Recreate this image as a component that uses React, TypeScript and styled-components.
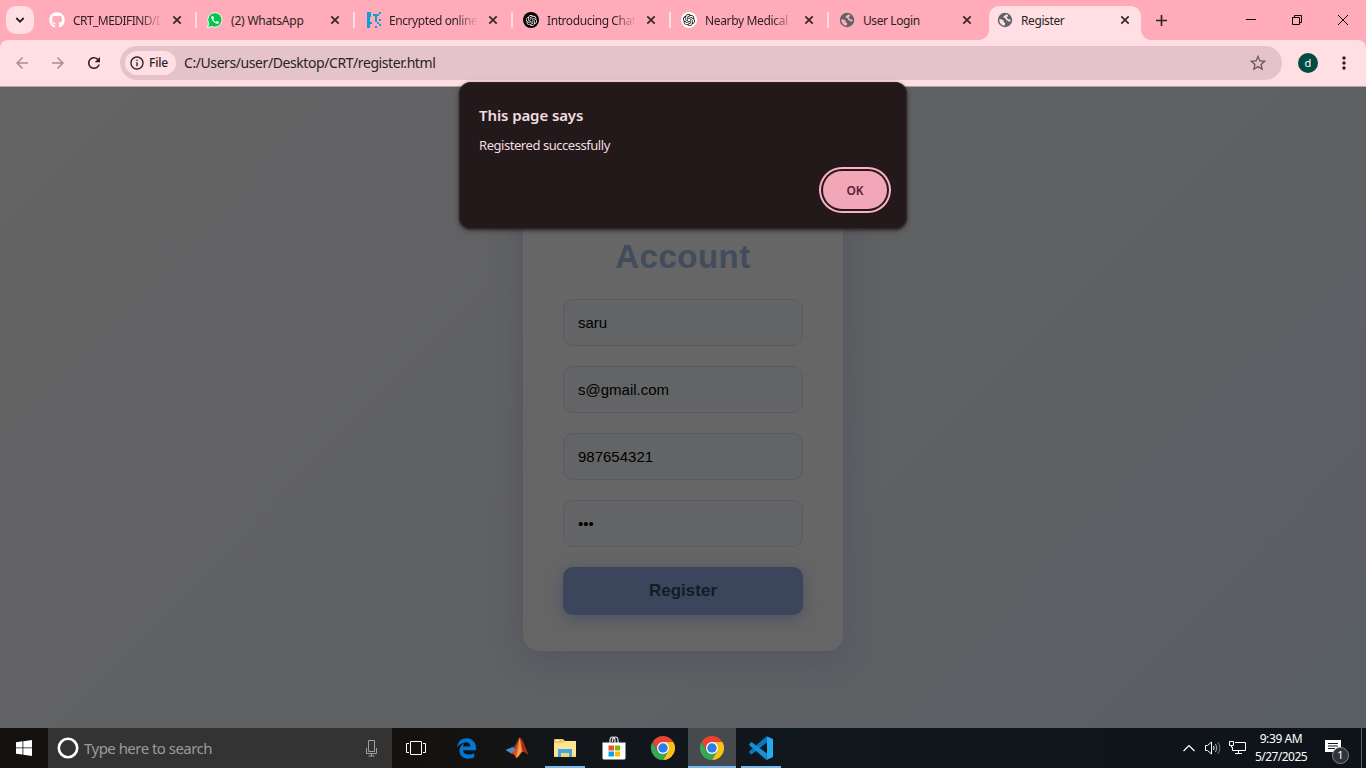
import React from "react";
import styled, { createGlobalStyle, css } from "styled-components";
import { SiOpenai } from "react-icons/si";
import { FaGithub, FaEdgeLegacy } from "react-icons/fa6";
import { MdRefresh, MdArrowBack, MdArrowForward, MdStarBorder, MdMoreVert, MdInfoOutline } from "react-icons/md";

const ui = `"Noto Sans", "Open Sans", sans-serif`;

const Global = createGlobalStyle`
  * { box-sizing: border-box; }
  body { margin: 0; overflow: hidden; background: #000; font-family: ${ui}; }
  svg { display: block; flex: none; }
`;

const Screen = styled.div`
  position: relative;
  width: 1366px;
  height: 768px;
  display: flex;
  flex-direction: column;
  overflow: hidden;
`;

/* ---------- text ---------- */
const Text = styled.span<{ $size: number; $track?: number; $color?: string; $weight?: number }>`
  display: block;
  font-size: ${(p) => p.$size}px;
  letter-spacing: ${(p) => p.$track ?? 0}px;
  color: ${(p) => p.$color ?? "#2b1f22"};
  font-weight: ${(p) => p.$weight ?? 400};
  white-space: pre;
  line-height: 1.36;
`;

/* ---------- tab strip ---------- */
const TabStrip = styled.header`
  height: 40px;
  background: #ffabb9;
  display: flex;
  align-items: stretch;
  padding-left: 6px;
`;
const TabSearch = styled.button`
  width: 28px;
  height: 28px;
  margin: 6px 7px 0 0;
  padding: 0;
  border: 0;
  border-radius: 10px;
  background: #ffdee4;
  display: grid;
  place-items: center;
`;
const TabBox = styled.div<{ $active?: boolean; $divider?: boolean }>`
  position: relative;
  width: 152px;
  height: 34px;
  margin: 6px 6px 0 0;
  padding: 0 8px;
  display: flex;
  align-items: center;
  ${(p) => p.$active && css`
    background: #ffdee4;
    border-radius: 10px 10px 0 0;
    &::before, &::after {
      content: "";
      position: absolute;
      bottom: 0;
      width: 10px;
      height: 10px;
    }
    &::before { left: -10px; background: radial-gradient(circle at 0 0, transparent 9.5px, #ffdee4 10.2px); }
    &::after { right: -10px; background: radial-gradient(circle at 100% 0, transparent 9.5px, #ffdee4 10.2px); }
  `}
  ${(p) => p.$divider && css`
    &::before {
      content: "";
      position: absolute;
      left: -4px;
      top: 6px;
      width: 2px;
      height: 16px;
      border-radius: 1px;
      background: #ffdee4;
    }
  `}
`;
const Favicon = styled.div`
  width: 16px;
  height: 28px;
  margin-bottom: 6px;
  display: grid;
  place-items: center;
`;
const TabTitle = styled.div<{ $fade?: boolean }>`
  width: 89px;
  margin: 0 8px 4px 7px;
  padding-left: 1px;
  overflow: hidden;
  ${(p) => p.$fade && css`mask-image: linear-gradient(90deg, #000 68px, transparent 90px);`}
`;
const CloseWrap = styled.div`
  width: 16px;
  margin-bottom: 6px;
  display: grid;
  place-items: center;
`;
const NewTab = styled.div`
  width: 28px;
  height: 40px;
  display: grid;
  place-items: center;
`;
const WindowButtons = styled.div`
  margin-left: auto;
  display: flex;
`;
const WindowButton = styled.div`
  width: 46px;
  height: 40px;
  display: grid;
  place-items: center;
`;

/* ---------- toolbar ---------- */
const ToolbarBack = styled.div`
  background: #ffabb9;
`;
const Toolbar = styled.div`
  height: 47px;
  background: #ffdee4;
  border-radius: 8px 8px 0 0;
  border-bottom: 1px solid #b5a2a6;
  display: flex;
  align-items: center;
  padding: 0 10px 0 10px;
`;
const NavButton = styled.div<{ $color: string }>`
  width: 24px;
  margin-right: 12px;
  display: grid;
  place-items: center;
  color: ${(p) => p.$color};
`;
const Omnibox = styled.div`
  width: 1162px;
  height: 34px;
  margin-left: 2px;
  border-radius: 17px;
  background: #e4c4ca;
  display: flex;
  align-items: center;
  padding: 0 14px 0 5px;
`;
const FileChip = styled.div`
  width: 51px;
  height: 24px;
  border-radius: 12px;
  background: #ffdee4;
  display: flex;
  align-items: center;
  gap: 4px;
  padding-left: 4px;
  margin-right: 8px;
`;
const StarWrap = styled.div`
  margin-left: auto;
  color: #6c5a5f;
`;
const Avatar = styled.div`
  width: 20px;
  height: 20px;
  margin: 0 16px;
  border-radius: 50%;
  background: #004d40;
  display: grid;
  place-items: center;
`;

/* ---------- page ---------- */
const Page = styled.main`
  flex: 1;
  min-height: 0;
  background: linear-gradient(135deg, #646465 0%, #606163 50%, #5a5f64 100%);
  display: flex;
  justify-content: center;
  align-items: center;
  font-family: "Liberation Sans", Arial, sans-serif;
`;
const Card = styled.form`
  width: 320px;
  height: 487px;
  padding: 72px 40px 36px;
  border-radius: 16px;
  background: #666666;
  box-shadow: 0 8px 32px rgba(57, 63, 92, 0.32);
  display: flex;
  flex-direction: column;
  gap: 20px;
`;
const Heading = styled.h1`
  margin: 0 0 4px;
  height: 39px;
  font-size: 33px;
  line-height: 41px;
  letter-spacing: 0.5px;
  font-weight: 700;
  text-align: center;
  color: #414c5c;
`;
const Field = styled.input`
  width: 240px;
  height: 47px;
  padding: 0 14px;
  border: 1px solid #595a62;
  border-radius: 10px;
  background: #636465;
  color: #000;
  font: 15px "Liberation Sans", Arial, sans-serif;
  outline: 0;
`;
const Submit = styled.button`
  width: 240px;
  height: 48px;
  padding: 0 0 1px;
  border: 0;
  border-radius: 10px;
  background: #3b455c;
  box-shadow: 0 4px 16px rgba(59, 69, 100, 0.6);
  color: #151b25;
  font: 700 17px "Liberation Sans", Arial, sans-serif;
`;

/* ---------- dialog ---------- */
const Dialog = styled.section`
  position: absolute;
  left: 459px;
  top: 82px;
  width: 448px;
  height: 147px;
  padding: 22px 20px 0;
  border-radius: 12px;
  background: #23191b;
  box-shadow: inset 0 0 0 1px #32262a, 0 1px 3px rgba(0, 0, 0, 0.5), 0 2px 6px rgba(0, 0, 0, 0.25);
  display: flex;
  flex-direction: column;
`;
const DialogLine = styled.div<{ $height: number; $gap: number }>`
  height: ${(p) => p.$height}px;
  margin-bottom: ${(p) => p.$gap}px;
  display: flex;
  align-items: center;
`;
const OkButton = styled.button`
  align-self: flex-end;
  width: 64px;
  height: 38px;
  padding: 2px 0 0;
  border: 0;
  border-radius: 19px;
  background: #f2a7b8;
  box-shadow: 0 0 0 2px #23191b, 0 0 0 4px #ffb1c1;
  display: grid;
  place-items: center;
  font-family: ${ui};
`;

/* ---------- taskbar ---------- */
const Taskbar = styled.footer`
  height: 40px;
  background: linear-gradient(90deg, #14100d 0, #15110e 30%, #11161b 44%, #10171d 60%, #0d1319 100%);
  display: flex;
  align-items: stretch;
`;
const StartButton = styled.div`
  width: 48px;
  display: grid;
  place-items: center;
`;
const SearchBox = styled.div`
  width: 344px;
  background: #333333;
  display: flex;
  align-items: center;
  padding: 0 14px 0 9px;
  gap: 5px;
`;
const MicWrap = styled.div`
  margin-left: auto;
`;
const TaskItem = styled.div<{ $open?: boolean; $active?: boolean; $width?: number }>`
  width: ${(p) => p.$width ?? 49}px;
  display: grid;
  place-items: center;
  background: ${(p) => (p.$active ? "#454a4e" : "transparent")};
  position: relative;
  ${(p) => (p.$open || p.$active) && css`
    &::after {
      content: "";
      position: absolute;
      bottom: 0;
      left: ${p.$active ? 0 : 5}px;
      right: ${p.$active ? 0 : 4}px;
      height: 2px;
      background: #76b9ed;
    }
  `}
`;
const Tray = styled.div`
  margin-left: auto;
  display: flex;
  align-items: center;
`;
const TrayIcon = styled.div<{ $width: number }>`
  width: ${(p) => p.$width}px;
  display: grid;
  place-items: center;
`;
const Clock = styled.div`
  width: 62px;
  display: flex;
  flex-direction: column;
  align-items: center;
  gap: 2px;
`;
const ActionCenter = styled.div`
  position: relative;
  width: 49px;
  height: 40px;
  padding: 12px 0 0 13px;
`;
const Badge = styled.div`
  position: absolute;
  left: 20px;
  top: 19px;
  width: 17px;
  height: 17px;
  border-radius: 50%;
  border: 1px solid #85878a;
  background: #30343a;
  display: grid;
  place-items: center;
`;
const ShowDesktop = styled.div`
  width: 5px;
  height: 40px;
  border-left: 1px solid #5b5f63;
`;

/* ---------- icons ---------- */
const CloseIcon = () => (
  <svg width="10" height="10" viewBox="0 0 10 10"><path d="M1.3 1.3 8.7 8.7M8.7 1.3 1.3 8.7" stroke="#33272a" strokeWidth="1.7" /></svg>
);
const GlobeIcon = ({ land }: { land: string }) => (
  <svg width="16" height="16" viewBox="0 0 16 16">
    <circle cx="8" cy="8" r="7.2" fill="#5f6368" />
    <path d="M2.200 7.600C3.500 7.100 5 7.400 6.200 8.300 7.400 9.200 6 10 7.200 10.400 8.800 10.800 8.300 12.100 7.400 13.700 4.400 13.400 2.200 10.900 2.200 7.600Z" fill={land} />
    <path d="M9.200 2.300C8.300 4 6.500 3.600 6.400 5.200 6.500 6.300 7.700 5.700 8.500 6.400 9.300 7.200 8.900 8.200 10.200 8.400 11.400 8.500 11.500 9.700 12.900 9.800 13.300 9.200 13.600 8.600 13.700 7.800 12.900 7.300 12.300 7.900 11.500 7.200 10.800 6.400 9.800 6.600 9.700 5.600 9.700 4.700 11.100 4.800 11.200 3.300 10.600 2.800 10 2.500 9.200 2.300Z" fill={land} />
  </svg>
);
const WhatsAppIcon = () => (
  <svg width="16" height="16" viewBox="0 0 16 16">
    <path d="M8 .6A7.3 7.3 0 0 0 1.7 11.6L.6 15.5l4-1A7.3 7.3 0 1 0 8 .6Z" fill="#05c34b" stroke="#f2fff4" strokeWidth="1" />
    <path d="M5.5 4.1c-.8.2-1.3 1-1.1 2 .5 2.900 2.900 5.200 5.600 5.700 1 .1 1.900-.6 1.900-1.500 0-.5-1.700-1.400-2.100-1.200l-.8.9c-1.200-.5-2.200-1.400-2.700-2.600l.7-.9c.1-.4-.7-2.400-1.500-2.400Z" fill="#fff" />
  </svg>
);
const PixelIcon = () => (
  <svg width="16" height="16" viewBox="0 0 16 16" fill="#0f9fd0" shapeRendering="crispEdges">
    <path d="M2 0h4v5H5v5h2v2H5v4H2ZM8 2h6v2h-2v6h-2V4H8ZM14 0h2v2h-2ZM14 7h2v2h-2ZM12 10h2v2h-2ZM14 12h2v2h-2ZM10 14h2v2h-2Z" />
  </svg>
);
const OpenAiBadge = styled.div<{ $dark?: boolean }>`
  width: 16px;
  height: 16px;
  border-radius: 50%;
  display: grid;
  place-items: center;
  background: ${(p) => (p.$dark ? "#000" : "#fff")};
  color: ${(p) => (p.$dark ? "#fff" : "#111")};
`;
const ChromeIcon = () => (
  <svg width="24" height="24" viewBox="0 0 48 48">
    <path d="M44.800 12A24 24 0 0 1 24 48L34.400 30 24 12Z" fill="#fbc116" />
    <path d="M3.200 12A24 24 0 0 0 24 48L34.400 30 13.600 30Z" fill="#34a853" />
    <path d="M3.200 12A24 24 0 0 1 44.800 12H24L13.600 30Z" fill="#ea4335" />
    <circle cx="24" cy="24" r="12" fill="#fff" />
    <circle cx="24" cy="24" r="9.500" fill="#2b7de9" />
  </svg>
);
const MatlabIcon = () => (
  <svg width="24" height="22" viewBox="0 0 24 22">
    <path d="M.5 13 8 9.800l3 2.700-4.500 4.300Z" fill="#4d8fc4" />
    <path d="M8 9.800C10.500 9 11 5 14.500.8L11 14l-3 1.500-1.500 1.300 4.500-4.300Z" fill="#6f3430" />
    <path d="M14.500.5C12.500 5 11.500 11.500 6.500 16.800c2.500-.6 3.500 2 4.500 4.200 4-1 5-6.500 7-6.500 1.800 0 3 1.500 5.500 3.300C20.500 12.500 17.500.6 14.500.5Z" fill="#d9531e" />
    <path d="M14.500.5c-.5 5-1.500 13-3.500 20.500 3.300-1.500 4-5.500 6-6.500-1-4-1.700-10.500-2.500-14Z" fill="#f6a04d" />
    <path d="M14.500.5c1.500 2 2.200 8.500 3.500 14 1.800 0 3 1.500 5.500 3.300C20.500 12.500 17.500.6 14.500.5Z" fill="#a9281b" />
  </svg>
);
const FolderIcon = () => (
  <svg width="22" height="20" viewBox="0 0 22 20">
    <path d="M0 1.500 1 1h8l2 2h10v16H0Z" fill="#f0c55a" />
    <path d="M2 2h3v1H2Z" fill="#fff" />
    <path d="M0 5h9l2-2h11v16H0Z" fill="#ffe592" />
    <path d="M4 11h14v8h-3v-4H7v4H4Z" fill="#3fa9e5" />
    <path d="M0 17.500h4V19H0ZM18 17.500h4V19h-4ZM7 15h8v4H7Z" fill="#f5d673" />
  </svg>
);
const StoreIcon = () => (
  <svg width="24" height="24" viewBox="0 0 24 24">
    <path d="M8 8V4.500C8 2.500 9 1 10.500 1S13 2.500 13 4.500V7M10.500 6V4.500C10.500 2.500 12 1 13.500 1S16 2.500 16 4.500V8" fill="none" stroke="#e8e8e8" strokeWidth="1.200" />
    <path d="M.5 6.500h23V22a1.500 1.500 0 0 1-1.500 1.500H2A1.500 1.500 0 0 1 .5 22Z" fill="#fff" />
    <path d="M6.500 9.500H12v5H6.500Z" fill="#f25022" /><path d="M13 9.500h5v5h-5Z" fill="#7fba00" />
    <path d="M6.500 15.500H12v5H6.500Z" fill="#00a4ef" /><path d="M13 15.500h5v5h-5Z" fill="#ffb900" />
  </svg>
);
const CodeIcon = () => (
  <svg width="24" height="24" viewBox="0 0 24 24">
    <path d="M.3 15.300 17.500.2 18.500 6 2.500 18.500.3 17Z" fill="#0878bd" />
    <path d="M.3 8 2.500 6 18 17.500 17.500 24 .3 9.200Z" fill="#1690d6" />
    <path d="M17.500.2 24 3v18l-6.500 3c-.5 0 .5-1 .5-2V2Z" fill="#27a8f1" />
  </svg>
);

type TabInfo = { title: string; icon: React.ReactNode; fade?: boolean; active?: boolean; track?: number };
const tabs: TabInfo[] = [
  { title: "CRT_MEDIFIND/D", icon: <FaGithub size={16} color="#fff" />, fade: true, track: -0.55 },
  { title: "(2) WhatsApp", icon: <WhatsAppIcon />, track: -0.2 },
  { title: "Encrypted online", icon: <PixelIcon />, fade: true, track: -0.42 },
  { title: "Introducing Chat", icon: <OpenAiBadge $dark><SiOpenai size={11} /></OpenAiBadge>, fade: true, track: -0.42 },
  { title: "Nearby Medical", icon: <OpenAiBadge><SiOpenai size={12} /></OpenAiBadge>, fade: true, track: -0.35 },
  { title: "User Login", icon: <GlobeIcon land="#ffabb9" />, track: -0.4 },
  { title: "Register", icon: <GlobeIcon land="#ffdee4" />, active: true, track: -0.4 },
];

export default function App() {
  return (
    <Screen>
      <Global />
      <TabStrip>
        <TabSearch>
          <svg width="10" height="10" viewBox="0 0 10 10"><path d="M1.300 3 5 6.700 8.700 3" fill="none" stroke="#2b1f22" strokeWidth="1.800" /></svg>
        </TabSearch>
        {tabs.map((t, i) => (
          <TabBox key={t.title} $active={t.active} $divider={i > 0 && !t.active}>
            <Favicon>{t.icon}</Favicon>
            <TabTitle $fade={t.fade}><Text $size={12} $track={t.track}>{t.title}</Text></TabTitle>
            <CloseWrap><CloseIcon /></CloseWrap>
          </TabBox>
        ))}
        <NewTab>
          <svg width="11" height="11" viewBox="0 0 11 11"><path d="M5.500 0v11M0 5.500h11" stroke="#2b1f22" strokeWidth="1.600" /></svg>
        </NewTab>
        <WindowButtons>
          <WindowButton><svg width="10" height="10" viewBox="0 0 10 10"><path d="M0 4.500h10" stroke="#000" /></svg></WindowButton>
          <WindowButton>
            <svg width="10" height="10" viewBox="0 0 10 10"><path d="M.5 2.500h7v7h-7ZM2.500 2.500v-2h7v7h-2" fill="none" stroke="#000" /></svg>
          </WindowButton>
          <WindowButton><svg width="10" height="10" viewBox="0 0 10 10"><path d="M0 0 10 10M10 0 0 10" stroke="#000" /></svg></WindowButton>
        </WindowButtons>
      </TabStrip>
      <ToolbarBack>
        <Toolbar>
          <NavButton $color="#a58f95"><MdArrowBack size={18} /></NavButton>
          <NavButton $color="#a58f95"><MdArrowForward size={18} /></NavButton>
          <NavButton $color="#2b1f22"><MdRefresh size={18} /></NavButton>
          <Omnibox>
            <FileChip>
              <MdInfoOutline size={16} color="#2b1f22" />
              <Text $size={12} $track={-0.2} $weight={500}>File</Text>
            </FileChip>
            <Text $size={14} $track={-0.42}>C:/Users/user/Desktop/CRT/register.html</Text>
            <StarWrap><MdStarBorder size={20} /></StarWrap>
          </Omnibox>
          <Avatar><Text $size={11} $color="#fff">d</Text></Avatar>
          <MdMoreVert size={20} color="#2b1f22" />
        </Toolbar>
      </ToolbarBack>

      <Page>
        <Card>
          <Heading>Account</Heading>
          <Field readOnly defaultValue="saru" />
          <Field readOnly defaultValue="s@gmail.com" />
          <Field readOnly defaultValue="987654321" />
          <Field readOnly defaultValue="•••" />
          <Submit type="button">Register</Submit>
        </Card>
      </Page>

      <Taskbar>
        <StartButton>
          <svg width="16" height="16" viewBox="0 0 16 16" fill="#fff"><path d="M0 2.200 6.500 1.300v6.200H0ZM7.300 1.200 16 0v7.500H7.300ZM0 8.300h6.500v6.300L0 13.700ZM7.300 8.300H16V16l-8.700-1.200Z" /></svg>
        </StartButton>
        <SearchBox>
          <svg width="22" height="22" viewBox="0 0 22 22"><circle cx="11" cy="11" r="9.200" fill="none" stroke="#fff" strokeWidth="2.600" /></svg>
          <Text $size={15} $track={-0.53} $color="#9b9b9b">Type here to search</Text>
          <MicWrap>
            <svg width="13" height="17" viewBox="0 0 13 17" fill="none" stroke="#a0a0a0"><path d="M3.500.5h6v11h-6ZM1.500 8v5.500h10V8M6.500 13.500v2.500M3.500 16h6" /></svg>
          </MicWrap>
        </SearchBox>
        <TaskItem $width={48}>
          <svg width="20" height="14" viewBox="0 0 20 14" fill="none" stroke="#fff"><path d="M4.500.5h11v13h-11ZM3 2.500H.5v9H3M17 2.500h2.500v9H17" /></svg>
        </TaskItem>
        <TaskItem $width={53}><FaEdgeLegacy size={21} color="#0078d7" /></TaskItem>
        <TaskItem $width={47}><MatlabIcon /></TaskItem>
        <TaskItem $open><FolderIcon /></TaskItem>
        <TaskItem><StoreIcon /></TaskItem>
        <TaskItem $width={50}><ChromeIcon /></TaskItem>
        <TaskItem $active $width={48}><ChromeIcon /></TaskItem>
        <TaskItem $open $width={49}><CodeIcon /></TaskItem>
        <Tray>
          <TrayIcon $width={24}><svg width="12" height="8" viewBox="0 0 12 8"><path d="M.5 7 6 1.500 11.500 7" fill="none" stroke="#fff" strokeWidth="1.200" /></svg></TrayIcon>
          <TrayIcon $width={24}>
            <svg width="17" height="14" viewBox="0 0 17 14" fill="none" stroke="#fff"><path d="M.5 4.500h2l4-3.500v12l-4-3.500h-2ZM8.500 5q1.300 2 0 4" /><path d="M10.500 3q2.800 4 0 8" stroke="#bbb" /><path d="M12.700 1q4.300 6 0 12" stroke="#777" /></svg>
          </TrayIcon>
          <TrayIcon $width={25}>
            <svg width="17" height="14" viewBox="0 0 17 14" fill="none" stroke="#fff"><path d="M6 1.500h10.500v8h-13V6M.5.5h4v4h-4ZM2.500 4.500v2M9.500 9.500v3M6 12.500h7" /></svg>
          </TrayIcon>
          <Clock>
            <Text $size={12} $track={-0.4} $color="#fff">9:39 AM</Text>
            <Text $size={12} $track={-0.55} $color="#fff">5/27/2025</Text>
          </Clock>
          <ActionCenter>
            <svg width="16" height="15" viewBox="0 0 16 15"><path d="M0 0h16v12h-5l-3 3v-3H0Z" fill="#fff" /><path d="M3 3.500h10M3 6h10M3 8.500h7" stroke="#11161b" /></svg>
            <Badge><Text $size={11} $color="#fff">1</Text></Badge>
          </ActionCenter>
          <ShowDesktop />
        </Tray>
      </Taskbar>

      <Dialog>
        <DialogLine $height={23} $gap={9}><Text $size={15} $track={-0.1} $weight={600} $color="#f2dde1">This page says</Text></DialogLine>
        <DialogLine $height={20} $gap={15}><Text $size={13} $track={-0.45} $color="#f2dde1">Registered successfully</Text></DialogLine>
        <OkButton><Text $size={12} $weight={600} $color="#5c1c33">OK</Text></OkButton>
      </Dialog>
    </Screen>
  );
}
